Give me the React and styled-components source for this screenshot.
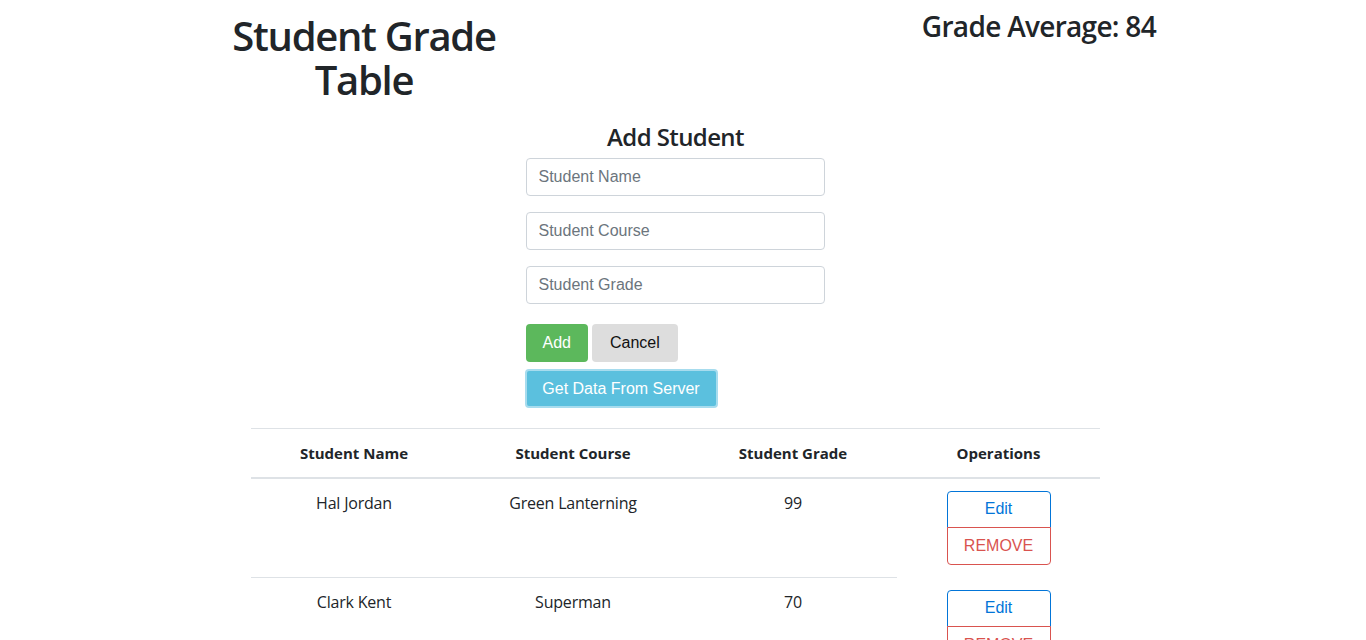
import React from "react";
import styled, { createGlobalStyle } from "styled-components";

const GlobalStyle = createGlobalStyle`
  body {
    margin: 0;
    background: #fff;
    color: #212529;
    font-family: "Open Sans", "Noto Sans", sans-serif;
  }
  * { box-sizing: border-box; }
`;

const Page = styled.div`
  width: 1351px;
`;

const Header = styled.header`
  display: flex;
  align-items: flex-start;
  padding: 14px 195px 0 214px;
`;

const Title = styled.h1`
  width: 300px;
  margin: 0;
  text-align: center;
  font-size: 40px;
  line-height: 44px;
  font-weight: 600;
  letter-spacing: -1.3px;
`;

const Average = styled.h2`
  margin: -5px 0 0 auto;
  font-size: 28px;
  line-height: 34px;
  font-weight: 600;
  letter-spacing: -0.7px;
`;

const FormSection = styled.section`
  width: 300px;
  margin: 20px auto 0;
  display: flex;
  flex-direction: column;
`;

const FormTitle = styled.h4`
  margin: 0 0 7px;
  text-align: center;
  font-size: 24px;
  line-height: 29px;
  font-weight: 600;
  letter-spacing: -0.6px;
`;

const Input = styled.input`
  display: block;
  width: 299px;
  height: 38px;
  padding: 6px 12px;
  margin-bottom: 16px;
  border: 1px solid #ced4da;
  border-radius: 4px;
  font-family: "Liberation Sans", Arial, sans-serif;
  font-size: 16px;
  color: #495057;
  &::placeholder { color: #6c757d; opacity: 1; }
`;

const ButtonRow = styled.div`
  display: flex;
  gap: 4px;
  margin-top: 4px;
`;

const Btn = styled.button`
  height: 38px;
  padding: 0 ${p => p.$px || 16}px;
  border: 1px solid transparent;
  border-radius: 4px;
  font-family: "Liberation Sans", Arial, sans-serif;
  font-size: 16px;
  white-space: nowrap;
  background: ${p => p.$bg};
  color: ${p => p.$fg};
  cursor: pointer;
`;

const ServerBtn = styled(Btn)`
  margin-top: 7px;
  width: 193px;
  height: 39px;
  padding: 0;
  margin-left: -1px;
  border: 2px solid #a7dcee;
  align-self: flex-start;
`;

const Table = styled.table`
  width: 849px;
  margin: 20px auto 0;
  border-collapse: collapse;
  font-size: 16px;
`;

const Th = styled.th`
  border-top: 1px solid #dee2e6;
  border-bottom: 2px solid #dee2e6;
  padding: 12px;
  height: 49px;
  font-weight: 700;
  font-size: 15px;
  text-align: center;
  width: ${p => p.$w}px;
`;

const Td = styled.td`
  padding: 11px 12px 0;
  height: 100px;
  vertical-align: top;
  text-align: center;
  line-height: 26px;
  letter-spacing: -0.2px;
  border-top: ${p => (p.$noBorder ? "none" : "1px solid #dee2e6")};
`;

const OpsGroup = styled.div`
  display: inline-flex;
  flex-direction: column;
  width: 104px;
  margin-top: 1px;
`;

const OpButton = styled.button`
  height: 37px;
  background: #fff;
  font-family: "Liberation Sans", Arial, sans-serif;
  font-size: 16px;
  letter-spacing: 0;
  color: ${p => p.$c};
  border: 1px solid ${p => p.$c};
  border-radius: ${p => (p.$top ? "4px 4px 0 0" : "0 0 4px 4px")};
  ${p => (p.$top ? "" : "margin-top: -1px; height: 38px;")}
  cursor: pointer;
`;

const students = [
  { name: "Hal Jordan", course: "Green Lanterning", grade: 99 },
  { name: "Clark Kent", course: "Superman", grade: 70 },
];

export default function App() {
  return (
    <Page>
      <GlobalStyle />
      <Header>
        <Title>Student Grade Table</Title>
        <Average>Grade Average: 84</Average>
      </Header>
      <FormSection>
        <FormTitle>Add Student</FormTitle>
        <Input placeholder="Student Name" />
        <Input placeholder="Student Course" />
        <Input placeholder="Student Grade" />
        <ButtonRow>
          <Btn $bg="#5cb85c" $fg="#fff" $px={16}>Add</Btn>
          <Btn $bg="#dddddd" $fg="#111" $px={17}>Cancel</Btn>
        </ButtonRow>
        <ServerBtn $bg="#5bc0de" $fg="#fff">Get Data From Server</ServerBtn>
      </FormSection>
      <Table>
        <thead>
          <tr>
            <Th $w={206}>Student Name</Th>
            <Th $w={232}>Student Course</Th>
            <Th $w={208}>Student Grade</Th>
            <Th $w={203}>Operations</Th>
          </tr>
        </thead>
        <tbody>
          {students.map((s, i) => (
            <tr key={s.name}>
              <Td $noBorder={i === 0}>{s.name}</Td>
              <Td $noBorder={i === 0}>{s.course}</Td>
              <Td $noBorder={i === 0}>{s.grade}</Td>
              <Td $noBorder>
                <OpsGroup>
                  <OpButton $top $c="#0275d8">Edit</OpButton>
                  <OpButton $c="#d9534f">REMOVE</OpButton>
                </OpsGroup>
              </Td>
            </tr>
          ))}
        </tbody>
      </Table>
    </Page>
  );
}
